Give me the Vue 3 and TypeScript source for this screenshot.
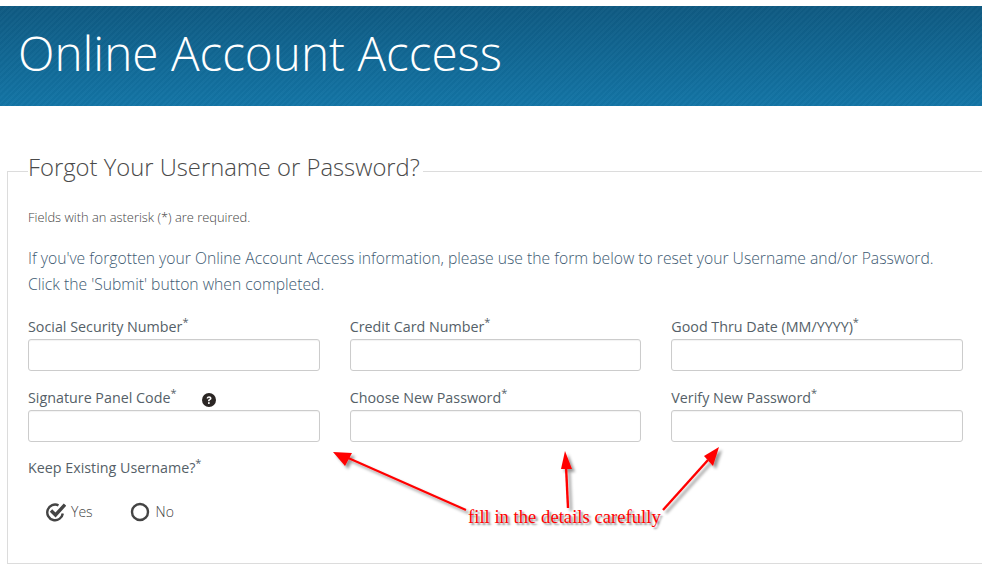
<script setup lang="ts">
interface Field {
  label: string
  help?: boolean
}

const fields: Field[] = [
  { label: 'Social Security Number' },
  { label: 'Credit Card Number' },
  { label: 'Good Thru Date (MM/YYYY)' },
  { label: 'Signature Panel Code', help: true },
  { label: 'Choose New Password' },
  { label: 'Verify New Password' },
]
</script>

<template>
  <div class="page">
    <header class="banner">
      <h1>Online Account Access</h1>
    </header>
    <fieldset class="panel">
      <legend>Forgot Your Username or Password?</legend>
      <p class="note">Fields with an asterisk (*) are required.</p>
      <p class="intro">
        If you've forgotten your Online Account Access information, please use the form below to reset your Username and/or Password.<br />
        Click the 'Submit' button when completed.
      </p>
      <div class="grid">
        <div v-for="f in fields" :key="f.label" class="field">
          <label class="lbl">
            {{ f.label }}<sup>*</sup>
            <svg v-if="f.help" class="help" viewBox="0 0 14 14" width="14" height="14">
              <circle cx="7" cy="7" r="7" fill="#2b2624" />
              <path d="M4.6 5.4C4.8 4 5.8 3.3 7.1 3.3c1.4 0 2.4.8 2.4 2 0 1-.6 1.4-1.2 1.8-.5.3-.7.6-.7 1.2H6c0-1 .3-1.6 1-2 .5-.3.8-.5.8-.9 0-.4-.3-.7-.8-.7-.5 0-.8.3-.9.9z" fill="#fff" />
              <rect x="6" y="9.2" width="1.7" height="1.7" fill="#fff" />
            </svg>
          </label>
          <input class="inp" type="text" />
        </div>
      </div>
      <div class="lbl keep">Keep Existing Username?<sup>*</sup></div>
      <div class="radios">
        <span class="radio">
          <svg viewBox="0 0 20 20" width="20" height="20">
            <path d="M16.8 11.5A7.8 7.8 0 1 1 12.5 3.4" fill="none" stroke="#444" stroke-width="2.4" />
            <path d="M5 8.5l4.5 4.5L19 2.6" fill="none" stroke="#444" stroke-width="3.4" />
          </svg>
          Yes
        </span>
        <span class="radio">
          <svg viewBox="0 0 20 20" width="20" height="20">
            <circle cx="10" cy="10" r="8" fill="none" stroke="#444" stroke-width="2.4" />
          </svg>
          No
        </span>
      </div>
    </fieldset>

    <svg class="arrows" width="982" height="564" viewBox="0 0 982 564">
      <defs>
        <filter id="sh" x="-20%" y="-20%" width="140%" height="140%">
          <feDropShadow dx="3" dy="3" stdDeviation="1.5" flood-color="#000" flood-opacity="0.4" />
        </filter>
      </defs>
      <g filter="url(#sh)" fill="#f00" stroke="#f00">
        <line x1="466" y1="510" x2="346" y2="457" stroke-width="2" />
        <polygon points="333,452 352,453 345,466" stroke="none" />
        <line x1="568" y1="508" x2="566" y2="466" stroke-width="2.4" />
        <polygon points="565,451 572,469 561,469" stroke="none" />
        <line x1="663" y1="510" x2="708" y2="460" stroke-width="2.4" />
        <polygon points="719,447 713,466 704,456" stroke="none" />
      </g>
    </svg>
    <div class="caption">fill in the details carefully</div>
  </div>
</template>

<style scoped>
.page {
  position: relative;
  width: 982px;
  height: 564px;
  overflow: hidden;
  padding-top: 6px;
  box-sizing: border-box;
  font-family: "Open Sans", sans-serif;
  color: #4f5b66;
}
.banner {
  height: 100px;
  box-sizing: border-box;
  padding: 17px 0 0 18px;
  background:
    repeating-linear-gradient(135deg, rgba(255, 255, 255, 0.02) 0 2px, rgba(0, 0, 0, 0.02) 2px 4px),
    linear-gradient(#0f5a82, #1375a6);
}
h1 {
  margin: 0;
  font-size: 47.7px;
  line-height: 60px;
  font-weight: 300;
  color: #fff;
}
.panel {
  margin: 46px 0 0 7px;
  padding: 0 0 0 20px;
  width: 1100px;
  height: 412px;
  box-sizing: border-box;
  border: 1px solid #dcdcdc;
}
legend {
  margin-left: 0;
  padding: 0 3px 8px 0;
  font-size: 23.8px;
  font-weight: 300;
  line-height: 30px;
  color: #4a4a4a;
}
.note {
  margin: 18px 0 0;
  font-size: 12.9px;
  line-height: 18px;
  font-weight: 300;
  color: #444;
}
.intro {
  margin: 19px 0 0;
  width: 935px;
  font-size: 15.7px;
  line-height: 26px;
  font-weight: 300;
  color: #3d5a72;
}
.grid {
  display: grid;
  grid-template-columns: repeat(3, 291.67px);
  column-gap: 30px;
  row-gap: 17px;
  margin-top: 20px;
}
.field {
  display: flex;
  flex-direction: column;
}
.lbl {
  display: block;
  position: relative;
  font-size: 14.3px;
  line-height: 20px;
  color: #555f68;
}
sup {
  font-size: 11px;
  line-height: 0;
}
.help {
  position: absolute;
  left: 174px;
  top: 5px;
}
.inp {
  box-sizing: border-box;
  height: 32px;
  width: 100%;
  margin-top: 2px;
  border: 1px solid #ccc;
  border-radius: 3px;
  background: #fff;
  box-shadow: inset 0 1px 1px rgba(0, 0, 0, 0.05);
}
.keep {
  margin-top: 16px;
}
.radios {
  display: flex;
  gap: 37px;
  margin: 24px 0 0 18px;
}
.radio {
  display: inline-flex;
  align-items: center;
  gap: 6px;
  font-size: 14px;
  line-height: 20px;
  font-weight: 300;
  color: #444;
}
.radio:first-child {
  gap: 5px;
}
.arrows {
  position: absolute;
  left: 0;
  top: 0;
  pointer-events: none;
}
.caption {
  position: absolute;
  left: 468px;
  top: 507px;
  font-family: "Liberation Serif", serif;
  font-size: 18.67px;
  line-height: 20px;
  color: #f00;
  white-space: nowrap;
  text-shadow: 2px 2px 2px rgba(0, 0, 0, 0.45);
}
</style>
